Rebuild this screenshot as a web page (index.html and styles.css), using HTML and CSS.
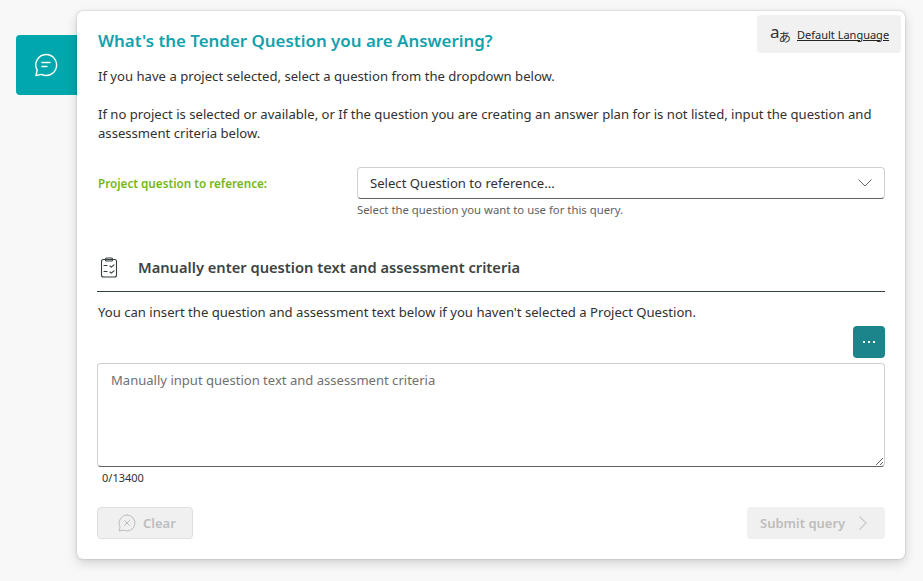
FILE: index.html
```html
<!DOCTYPE html>
<html lang="en">
<head>
    <meta charset="UTF-8">
    <title>Tender Question</title>
    <link rel="stylesheet" href="styles.css">
</head>
<body>

<div class="page">
    <!-- Side tab -->
    <div class="side-tab">
        <svg width="24" height="24" viewBox="0 0 24 24" fill="none" stroke="#fff" stroke-width="1.4" stroke-linecap="round" stroke-linejoin="round">
            <path d="M12 1.5a10.5 10.5 0 1 1-4.6 19.9L2 22.5l1.2-5.3A10.5 10.5 0 0 1 12 1.5z"/>
            <path d="M8 9.5h8M8 13.500h5"/>
        </svg>
    </div>

    <main class="card">
        <div class="language">
            <span class="language-icon"><span class="latin">a</span><span class="kana">あ</span></span>
            <a href="#">Default Language</a>
        </div>

        <h1>What's the Tender Question you are Answering?</h1>
        <p class="intro">If you have a project selected, select a question from the dropdown below.</p>
        <p class="intro">If no project is selected or available, or If the question you are creating an answer plan for is not listed, input the question and assessment criteria below.</p>

        <div class="question-row">
            <label class="question-label">Project question to reference:</label>
            <div class="question-field">
                <div class="dropdown">
                    <span>Select Question to reference...</span>
                    <svg width="14" height="8" viewBox="0 0 14 8" fill="none" stroke="#666" stroke-width="1">
                        <path d="M.5 .5 7 7 13.500 .5"/>
                    </svg>
                </div>
                <div class="hint">Select the question you want to use for this query.</div>
            </div>
        </div>

        <div class="section-head">
            <svg width="18" height="21" viewBox="0 0 18 21" fill="none" stroke="#333d3d" stroke-width="1.1" stroke-linecap="round" stroke-linejoin="round">
                <rect x="1.500" y="2.500" width="15" height="17.500" rx="2"/>
                <rect x="5.500" y="1" width="7" height="3" rx="1"/>
                <path d="M4 8.500h3M10 9l1.300 1.200L14 7.800M4 14.500h3M10 15l1.300 1.200L14 13.800"/>
            </svg>
            <h2>Manually enter question text and assessment criteria</h2>
        </div>

        <p class="section-note">You can insert the question and assessment text below if you haven't selected a Project Question.</p>

        <div class="more-row">
            <button class="more-btn"><span></span><span></span><span></span></button>
        </div>

        <textarea class="question-text" placeholder="Manually input question text and assessment criteria"></textarea>
        <div class="counter">0/13400</div>

        <div class="actions">
            <button class="btn btn-clear" disabled>
                <svg width="18" height="18" viewBox="0 0 18 18" fill="none" stroke="#bdbdbd" stroke-width="1" stroke-linecap="round" stroke-linejoin="round">
                    <path d="M9 1a8 8 0 1 1-3.500 15.200L1.200 17l.9-4A8 8 0 0 1 9 1z"/>
                    <path d="M6.500 6.500l5 5M11.500 6.500l-5 5"/>
                </svg>
                Clear
            </button>
            <button class="btn btn-submit" disabled>
                Submit query
                <svg width="8" height="14" viewBox="0 0 8 14" fill="none" stroke="#c8c8c8" stroke-width="1.100">
                    <path d="M.5 .5 7 7 .5 13.500"/>
                </svg>
            </button>
        </div>
    </main>
</div>

</body>
</html>
```

FILE: styles.css
```css
/* General */
html, body {
    height: 100%;
}

body {
    font-family: 'Noto Sans', 'Open Sans', sans-serif;
    background-color: #f8f8f8;
    margin: 0;
    color: #323130;
    font-size: 13.120px;
    overflow: hidden;
}

.page {
    display: flex;
    align-items: flex-start;
    padding: 11px 18px 0 16px;
}

/* Side tab */
.side-tab {
    width: 61px;
    height: 60px;
    margin-top: 24px;
    flex-shrink: 0;
    background-color: #00a7ad;
    border-radius: 4px 0 0 4px;
    display: flex;
    align-items: center;
    justify-content: center;
}

.side-tab svg {
    margin-right: 2px;
}

/* Card */
.card {
    position: relative;
    box-sizing: border-box;
    width: 828px;
    height: 548px;
    flex-shrink: 0;
    padding: 19px 20px 0;
    background-color: #fff;
    border-radius: 6px;
    box-shadow: 0 0 2px rgba(0,0,0,0.25), 0 4px 12px rgba(0,0,0,0.16);
}

.language {
    position: absolute;
    top: 4px;
    right: 4px;
    width: 144px;
    height: 38px;
    box-sizing: border-box;
    padding-left: 13px;
    display: flex;
    align-items: center;
    gap: 7px;
    background-color: #f1f1f1;
    border-radius: 4px;
}

.language-icon {
    display: flex;
    width: 20px;
    height: 20px;
    color: #333;
}

.language-icon .latin {
    font-size: 17px;
    line-height: 15px;
}

.language-icon .kana {
    margin-left: -1px;
    padding-top: 5px;
    font-family: 'Noto Sans CJK JP', sans-serif;
    font-size: 12.500px;
    line-height: 15px;
}

.language a {
    color: #242424;
    font-size: 11px;
}

h1 {
    margin: 0 0 15px;
    padding-left: 1px;
    font-size: 16.900px;
    line-height: 22px;
    font-weight: 600;
    color: #12a2ad;
}

.intro {
    margin: 0 0 19px;
    padding-left: 1px;
    line-height: 19px;
}

/* Question dropdown */
.question-row {
    display: flex;
    margin-top: 24px;
}

.question-label {
    width: 259px;
    padding: 8px 0 0 1px;
    font-size: 11.700px;
    line-height: 17px;
    font-weight: 600;
    color: #74b816;
}

.question-field {
    flex: 1;
}

.dropdown {
    box-sizing: border-box;
    height: 32px;
    padding: 0 12px;
    display: flex;
    align-items: center;
    justify-content: space-between;
    border: 1px solid #d1d1d1;
    border-bottom-color: #616161;
    border-radius: 4px;
}

.hint {
    margin-top: 3px;
    font-size: 11.340px;
    line-height: 15px;
    color: #616161;
}

/* Manual section */
.section-head {
    display: flex;
    align-items: center;
    gap: 20px;
    height: 47px;
    margin-top: 28px;
    padding-left: 3px;
    border-bottom: 1px solid #36403f;
    padding-bottom: 2px;
    box-sizing: border-box;
}

h2 {
    margin: 0;
    font-size: 14.700px;
    font-weight: 600;
    color: #3b4443;
}

.section-note {
    margin: 11px 0 0;
    padding-left: 1px;
    line-height: 19px;
}

.more-row {
    display: flex;
    justify-content: flex-end;
    margin-top: 4px;
}

.more-btn {
    width: 32px;
    height: 32px;
    padding: 0;
    border: none;
    border-radius: 4px;
    background-color: #1c858c;
    display: flex;
    align-items: center;
    justify-content: center;
    gap: 2.500px;
}

.more-btn span {
    width: 2.500px;
    height: 2.500px;
    background-color: #fff;
}

.question-text {
    display: block;
    box-sizing: border-box;
    width: 100%;
    height: 104px;
    margin: 5px 0 0;
    padding: 7px 13px;
    border: 1px solid #d1d1d1;
    border-bottom-color: #616161;
    border-radius: 4px;
    font-family: inherit;
    font-size: 13.050px;
    line-height: 19px;
    outline: none;
}

.question-text::placeholder {
    color: #707070;
}

.counter {
    margin-top: 3px;
    padding-left: 5px;
    font-size: 11px;
    line-height: 15px;
    color: #323130;
}

/* Buttons */
.actions {
    display: flex;
    justify-content: space-between;
    margin-top: 22px;
}

.btn {
    box-sizing: border-box;
    height: 32px;
    display: flex;
    align-items: center;
    font-family: inherit;
    font-size: 13px;
    font-weight: 600;
    color: #bdbdbd;
    background-color: #f0f0f0;
    border-radius: 4px;
}

.btn-clear {
    width: 96px;
    padding: 0 0 0 20px;
    gap: 7px;
    border: 1px solid #e0e0e0;
}

.btn-submit {
    width: 138px;
    padding: 0 0 0 13px;
    gap: 14px;
    border: none;
}
```
